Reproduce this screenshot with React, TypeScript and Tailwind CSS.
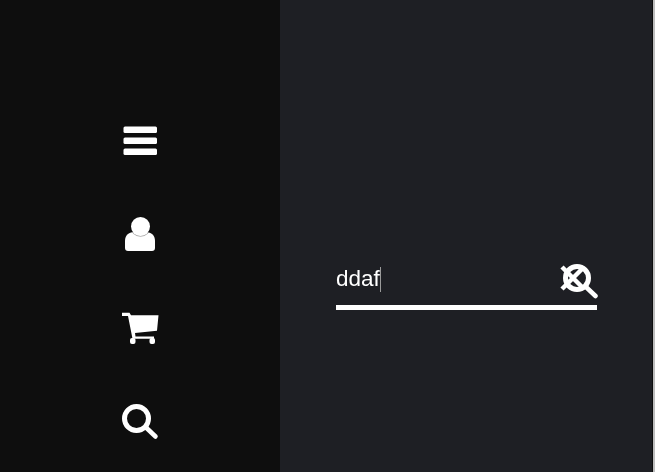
function Menu() {
  return (
    <svg viewBox="0 0 40 40" className="h-10 w-10" fill="white">
      <rect x="3.500" y="6.500" width="33.500" height="6.500" rx="1.500" />
      <rect x="3.500" y="17.500" width="33.500" height="6.500" rx="1.500" />
      <rect x="3.500" y="28.500" width="33.500" height="6.500" rx="1.500" />
    </svg>
  );
}

function User() {
  return (
    <svg viewBox="0 0 40 40" className="h-10 w-10" fill="white">
      <path d="M14 18h12c5.500 0 9 3.500 9 9v7c0 1.800-1.200 3-3 3H8c-1.800 0-3-1.200-3-3v-7c0-5.500 3.500-9 9-9z" />
      <circle cx="20.500" cy="12.500" r="10.300" fill="#0e0e0e" opacity="0.35" />
      <circle cx="20.500" cy="12.500" r="9.500" />
    </svg>
  );
}

function Cart() {
  return (
    <svg viewBox="0 0 40 40" className="h-10 w-10" fill="white">
      <path d="M2 4.700h7.500l1.500 2.600H38.500L37 22.700 15 25l.5 3.500H34v2.200H12.500L8 8H2z" />
      <rect x="10" y="30" width="5.500" height="6" rx="2" />
      <rect x="29.500" y="30" width="5.500" height="6" rx="2" />
    </svg>
  );
}

function Search() {
  return (
    <svg viewBox="0 0 40 40" className="h-10 w-10" fill="none" stroke="white">
      <circle cx="16.500" cy="16.500" r="12" strokeWidth="5" />
      <path d="M26 25.500 35.500 34.500" strokeWidth="4.500" strokeLinecap="round" />
    </svg>
  );
}

function SearchClose() {
  return (
    <svg viewBox="0 0 48 44" className="h-[44px] w-[48px]" fill="none" stroke="white">
      <circle cx="22" cy="20" r="11.500" strokeWidth="5" />
      <path d="M7 9 29 31M7 31 29 9" strokeWidth="4.500" />
      <path d="M31 29 40.500 38" strokeWidth="4.500" strokeLinecap="round" />
    </svg>
  );
}

export default function App() {
  return (
    <div className="flex h-[472px] w-[655px] overflow-hidden font-['Liberation_Sans',sans-serif] text-white">
      <nav className="flex w-[280px] flex-col items-center gap-[54px] bg-[#0e0e0e] pt-[120px] blur-[0.4px]">
        <Menu />
        <User />
        <Cart />
        <Search />
      </nav>
      <main className="flex-1 bg-[#1e1f24] pl-[56px] pt-[258px]">
        <div className="relative h-[52px] w-[261px] border-b-[5px] border-white blur-[0.35px]">
          <div className="flex h-[47px] items-center pb-[4px] text-[22.500px] leading-none text-white">
            ddaf
            <span className="h-[25px] w-px bg-[#9a9a9a]" />
          </div>
          <div className="absolute right-[-6px] top-0">
            <SearchClose />
          </div>
        </div>
      </main>
      <div className="w-[3px] border-l border-[#0e0e0e] bg-[#bdbdbd]" />
    </div>
  );
}
